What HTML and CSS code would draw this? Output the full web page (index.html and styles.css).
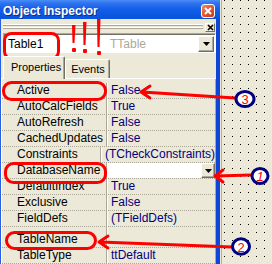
FILE: index.html
```html
<!DOCTYPE html>
<html>
<head>
<meta charset="utf-8">
<title>Object Inspector</title>
<link rel="stylesheet" href="styles.css">
</head>
<body>
<div class="screen">
  <div class="inspector">
    <div class="titlebar">
      <span class="title">Object Inspector</span>
      <span class="close"><svg width="12" height="12" viewBox="0 0 12 12"><path d="M3 3L9 9M9 3L3 9" stroke="#fff" stroke-width="2"/></svg></span>
    </div>
    <div class="body">
      <div class="grabber">
        <div class="grip"></div>
        <span class="dock-close"><svg width="7" height="7" viewBox="0 0 7 7"><path d="M1 1L6 6M6 1L1 6" stroke="#000" stroke-width="1.6"/></svg></span>
      </div>
      <div class="combo">
        <span class="combo-name">Table1</span>
        <span class="combo-type">TTable</span>
        <span class="drop-btn combo-btn"><svg width="7" height="4" viewBox="0 0 7 4"><path d="M0 0H7L3.5 4Z" fill="#000"/></svg></span>
      </div>
      <div class="tabs">
        <span class="tab tab-active">Properties</span>
        <span class="tab">Events</span>
      </div>
      <div class="sheet">
        <div class="row"><span class="name">Active</span><span class="value">False</span></div>
        <div class="row"><span class="name">AutoCalcFields</span><span class="value">True</span></div>
        <div class="row"><span class="name">AutoRefresh</span><span class="value">False</span></div>
        <div class="row"><span class="name">CachedUpdates</span><span class="value">False</span></div>
        <div class="row"><span class="name">Constraints</span><span class="value">(TCheckConstraints)</span></div>
        <div class="row"><span class="name">DatabaseName</span><span class="value value-edit"><span class="edit"></span><span class="drop-btn row-btn"><svg width="7" height="4" viewBox="0 0 7 4"><path d="M0 0H7L3.5 4Z" fill="#000"/></svg></span></span></div>
        <div class="row"><span class="name">DefaultIndex</span><span class="value">True</span></div>
        <div class="row"><span class="name">Exclusive</span><span class="value">False</span></div>
        <div class="row"><span class="name">FieldDefs</span><span class="value">(TFieldDefs)</span></div>
        <div class="row row-tall"><span class="name">TableName</span><span class="value"></span></div>
        <div class="row"><span class="name">TableType</span><span class="value">ttDefault</span></div>
      </div>
    </div>
  </div>
  <div class="designer">
    <svg class="dots" width="50" height="264" viewBox="0 0 50 264">
      <defs><pattern id="grid" width="8" height="8" x="2" y="0" patternUnits="userSpaceOnUse"><rect width="1" height="1" fill="#000"/></pattern></defs>
      <rect width="50" height="264" fill="url(#grid)"/>
    </svg>
  </div>
  <svg class="notes" width="272" height="264" viewBox="0 0 272 264">
    <g fill="none" stroke="#ff0000" stroke-width="3" stroke-linejoin="round" stroke-linecap="round">
      <rect x="4.5" y="33.5" width="54" height="25" rx="7"/>
      <rect x="3.5" y="82.5" width="102" height="17" rx="8"/>
      <rect x="5.5" y="163.5" width="100" height="19" rx="8"/>
      <rect x="6.5" y="232.5" width="89" height="16" rx="8"/>
      <path d="M235 98L142 92M150 86L141 92L150 98"/>
      <path d="M251 175L216 176M223 170L215 176L223 182"/>
      <path d="M232 247L100 242M108 236L99 242L108 248"/>
    </g>
    <g fill="#ff0000">
      <path d="M72 25H75.5L74.5 43H72.5Z"/>
      <rect x="72" y="48" width="4" height="4" rx="1"/>
      <path d="M83 22H86.5L85.5 45H83.5Z"/>
      <rect x="83" y="49" width="4" height="4" rx="1"/>
      <path d="M97 19H100.5L99.5 47H97.5Z"/>
      <rect x="97" y="51" width="4" height="4" rx="1"/>
    </g>
    <g fill="#fff" stroke="#000080" stroke-width="3">
      <ellipse cx="245" cy="99" rx="9" ry="7.5"/>
      <ellipse cx="260" cy="176" rx="8" ry="7.5"/>
      <ellipse cx="241" cy="246.5" rx="8.5" ry="7.7"/>
    </g>
    <g fill="#ff0000" font-family="Liberation Sans, Arial, sans-serif" font-size="13" text-anchor="middle">
      <text x="245" y="104">3</text>
      <text x="260" y="181" font-style="italic">1</text>
      <text x="241" y="251.5">2</text>
    </g>
  </svg>
</div>
</body>
</html>
```

FILE: styles.css
```css
* {
  box-sizing: border-box;
}

html,
body {
  margin: 0;
  padding: 0;
}

body {
  width: 272px;
  height: 264px;
  overflow: hidden;
  background: #ece9d8;
  font-family: "Liberation Sans", Arial, sans-serif;
  font-size: 12px;
  color: #000;
}

.screen {
  position: relative;
  display: flex;
  width: 272px;
  height: 264px;
  overflow: hidden;
}

.inspector {
  flex: none;
  width: 220px;
  display: flex;
  flex-direction: column;
}

.titlebar {
  height: 22px;
  display: flex;
  align-items: flex-end;
  justify-content: space-between;
  padding: 0 5px 1px 3px;
  background: linear-gradient(#4a8ef6 0, #2f74f0 3px, #155fe8 9px, #0a56e0 16px, #0a4fd6 22px);
}

.title {
  color: #fff;
  font-weight: bold;
  font-size: 12px;
  line-height: 13px;
  text-shadow: 1px 1px 0 #0a2d8c;
}

.close {
  width: 14px;
  height: 14px;
  display: flex;
  align-items: center;
  justify-content: center;
  border: 1px solid #fff;
  border-radius: 3px;
  background: linear-gradient(135deg, #f08a6c, #e2532f 50%, #c8391a);
}

.body {
  flex: 1;
  display: flex;
  flex-direction: column;
  border-left: 1px solid #2a5fe0;
  border-right: 4px solid #1046d8;
  background: #ece9d8;
}

.grabber {
  height: 14px;
  display: flex;
  align-items: flex-start;
  gap: 2px;
  padding: 4px 1px 0 2px;
}

.grip {
  flex: 1;
  height: 5px;
  margin-top: 1px;
  background: linear-gradient(#fff 0 1px, #aca899 1px 2px, transparent 2px 3px, #fff 3px 4px, #aca899 4px 5px);
}

.dock-close {
  width: 10px;
  height: 9px;
  display: flex;
  align-items: center;
  justify-content: center;
  border-top: 1px solid #fff;
  border-left: 1px solid #fff;
  border-right: 1px solid #716f64;
  border-bottom: 1px solid #716f64;
  background: #ece9d8;
}

.combo {
  height: 20px;
  margin: 0 0 0 2px;
  display: flex;
  align-items: center;
  border-top: 1px solid #aca899;
  border-left: 1px solid #aca899;
  border-right: 1px solid #fff;
  border-bottom: 1px solid #fff;
  box-shadow: inset 1px 1px 0 #716f64;
  background: #fff;
  padding: 1px 1px 0 2px;
}

.combo-name {
  width: 104px;
  padding-left: 2px;
}

.combo-type {
  flex: 1;
  color: #aca899;
}

.drop-btn {
  display: flex;
  align-items: center;
  justify-content: center;
  background: #ece9d8;
  border-top: 1px solid #fff;
  border-left: 1px solid #fff;
  border-right: 1px solid #716f64;
  border-bottom: 1px solid #716f64;
  box-shadow: inset -1px -1px 0 #aca899;
}

.combo-btn {
  width: 16px;
  height: 16px;
  align-self: flex-end;
}

.tabs {
  height: 24px;
  display: flex;
  align-items: flex-end;
  padding-left: 2px;
  margin-top: 1px;
  font-size: 11px;
}

.tab {
  height: 19px;
  display: flex;
  align-items: center;
  padding: 0 4px 0 5px;
  border-top: 1px solid #fff;
  border-left: 1px solid #fff;
  border-right: 1px solid #716f64;
  border-radius: 2px 2px 0 0;
  box-shadow: inset -1px 0 0 #aca899;
  white-space: nowrap;
}

.tab-active {
  position: relative;
  z-index: 1;
  height: 23px;
  margin-bottom: -1px;
  padding: 0 3px 3px 7px;
  background: #ece9d8;
}

.sheet {
  flex: 1;
  border-top: 1px solid #fff;
  border-left: 1px solid #fff;
  box-shadow: inset -1px 0 0 #aca899;
  padding: 4px 1px 0 0;
}

.row {
  display: flex;
  height: 16px;
  border-bottom: 1px dotted #aca899;
}

.row-tall {
  height: 21px;
}

.name {
  width: 105px;
  height: 15px;
  padding-left: 15px;
  line-height: 15px;
  border-right: 1px solid #aca899;
  white-space: nowrap;
}

.row-tall .name,
.row-tall .value {
  height: 20px;
  padding-top: 5px;
}

.value {
  flex: 1;
  height: 15px;
  padding-left: 3px;
  line-height: 15px;
  border-left: 1px solid #fff;
  color: #000080;
  white-space: nowrap;
}

.value-edit {
  display: flex;
  padding-left: 0;
}

.edit {
  flex: 1;
  background: #fff;
}

.row-btn {
  width: 14px;
  height: 15px;
}

.designer {
  flex: 1;
  margin-left: 1px;
  border-left: 1px solid #b5b19e;
  background: #ece9d8;
}

.dots {
  display: block;
}

.notes {
  position: absolute;
  left: 0;
  top: 0;
  pointer-events: none;
}
```
